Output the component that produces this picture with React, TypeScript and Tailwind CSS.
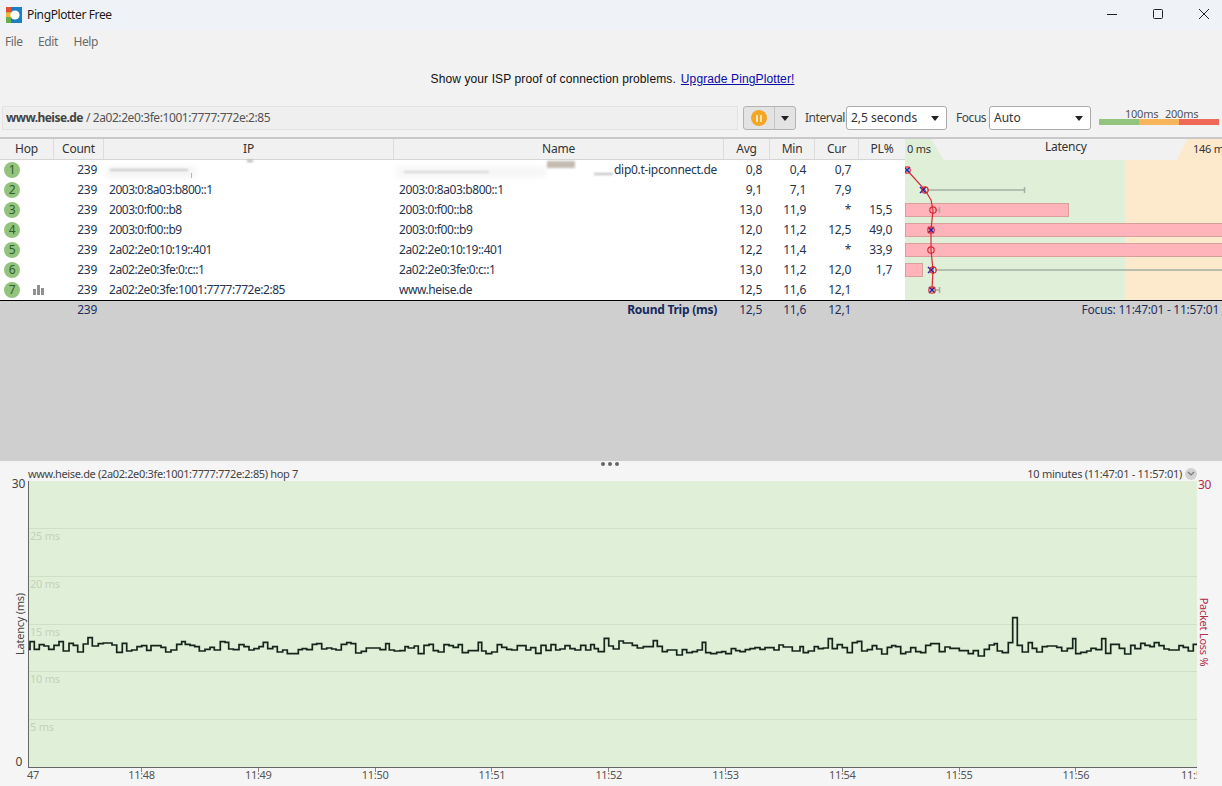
import React from 'react';

// trace readings: [end x, y] in px, 3 runs offset so they line up with the plot
const run1 = [[90,148],[103,125],[118,148],[132,134],[146,138],[162,148],[177,136],[190,125],[207,153],[220,130],[233,136],[250,156],[264,132],[277,113],[295,138],[310,131],[336,129],[350,135],[367,157],[380,130],[395,153],[411,150],[425,140],[440,137],[453,151],[483,137],[497,142],[513,156],[530,150],[545,133],[556,125],[570,133],[584,136],[598,140],[615,153],[630,148],[643,142],[661,150],[675,125],[686,127],[700,147],[717,149],[732,134],[747,140],[762,150],[777,146],[790,140],[803,127],[818,146],[832,140],[848,156],[862,150],[895,161],[907,149],[920,146],[937,149],[950,133],[965,131],[980,147],[995,144],[1008,147],[1024,150],[1040,133],[1053,128],[1067,131],[1084,159],[1099,154],[1140,144],[1157,149],[1168,131],[1183,150],[1200,153]];
const run2 = [[15,152],[25,140],[43,144],[55,138],[72,161],[87,136],[100,133],[115,152],[132,156],[147,134],[160,137],[175,142],[187,134],[205,158],[235,152],[245,127],[258,153],[275,161],[292,156],[305,134],[320,142],[335,148],[352,150],[378,137],[392,150],[407,143],[423,160],[438,136],[453,151],[467,134],[480,150],[495,147],[510,137],[525,146],[542,150],[557,136],[572,150],[583,134],[595,146],[613,155],[626,115],[640,138],[657,147],[670,123],[697,129],[712,136],[730,144],[745,140],[760,140],[772,122],[787,139],[802,155],[830,150],[847,165],[860,149],[877,158],[892,155],[907,150],[917,127],[932,158],[950,161],[965,157],[977,155],[994,161],[1007,146],[1020,152],[1036,155],[1050,149],[1065,146],[1080,143],[1095,148],[1122,143],[1137,150],[1150,135],[1177,141],[1200,153]];
const run3 = [[10,140],[25,158],[43,153],[55,140],[70,146],[85,144],[97,116],[112,146],[127,134],[142,143],[157,158],[172,128],[185,124],[202,153],[217,149],[230,137],[245,147],[262,162],[275,142],[287,137],[302,140],[317,161],[332,156],[347,143],[362,155],[377,158],[392,136],[418,131],[435,155],[450,141],[478,145],[505,152],[520,161],[535,152],[553,168],[568,148],[583,135],[592,131],[607,153],[625,158],[638,128],[652,53],[667,136],[685,156],[697,128],[710,145],[727,156],[742,140],[770,138],[785,142],[802,153],[818,145],[827,116],[842,161],[860,157],[873,153],[888,145],[905,149],[917,116],[932,160],[958,133],[974,145],[992,162],[1005,136],[1022,146],[1035,130],[1050,136],[1063,140],[1077,128],[1092,137],[1107,147],[1137,150],[1150,137],[1165,142],[1180,153],[1192,133]];

function tracePath() {
  const pts = [
    ...run1.map(([x, y]) => [x / 3 - 29, y / 3 + 119]),
    ...run2.map(([x, y]) => [x / 3 + 371, y / 3 + 119]),
    ...run3.map(([x, y]) => [x / 3 + 771, y / 3 + 119]),
  ];
  let d = `M0 ${pts[0][1].toFixed(1)}`;
  for (const [x, y] of pts) {
    d += `V${y.toFixed(1)}H${x.toFixed(1)}`;
  }
  return d;
}

const rows = [
  { hop: 1, ip: '', name: 'dip0.t-ipconnect.de', avg: '0,8', min: '0,4', cur: '0,7', pl: '' },
  { hop: 2, ip: '2003:0:8a03:b800::1', name: '2003:0:8a03:b800::1', avg: '9,1', min: '7,1', cur: '7,9', pl: '' },
  { hop: 3, ip: '2003:0:f00::b8', name: '2003:0:f00::b8', avg: '13,0', min: '11,9', cur: '*', pl: '15,5' },
  { hop: 4, ip: '2003:0:f00::b9', name: '2003:0:f00::b9', avg: '12,0', min: '11,2', cur: '12,5', pl: '49,0' },
  { hop: 5, ip: '2a02:2e0:10:19::401', name: '2a02:2e0:10:19::401', avg: '12,2', min: '11,4', cur: '*', pl: '33,9' },
  { hop: 6, ip: '2a02:2e0:3fe:0:c::1', name: '2a02:2e0:3fe:0:c::1', avg: '13,0', min: '11,2', cur: '12,0', pl: '1,7' },
  { hop: 7, ip: '2a02:2e0:3fe:1001:7777:772e:2:85', name: 'www.heise.de', avg: '12,5', min: '11,6', cur: '12,1', pl: '' },
];

const headers = ['Hop', 'Count', 'IP', 'Name', 'Avg', 'Min', 'Cur', 'PL%'];

const gridLines = [
  { top: 'top-[47px]', label: '25 ms' },
  { top: 'top-[95px]', label: '20 ms' },
  { top: 'top-[143px]', label: '15 ms' },
  { top: 'top-[190px]', label: '10 ms' },
  { top: 'top-[238px]', label: '5 ms' },
];

const ticks = ['11:48', '11:49', '11:50', '11:51', '11:52', '11:53', '11:54', '11:55', '11:56'];

function Logo() {
  return (
    <svg width="16" height="16" viewBox="0 0 16 16">
      <rect width="16" height="16" fill="#1b7fc4" />
      <rect width="5" height="5.3" fill="#e2502f" />
      <rect y="5.3" width="5" height="5.3" fill="#f2b632" />
      <rect y="10.6" width="5" height="5.4" fill="#63b046" />
      <circle cx="9" cy="8" r="4.6" fill="#fff" />
    </svg>
  );
}

function Caret() {
  return <span className="w-0 h-0 border-x-[4px] border-x-transparent border-t-[5px] border-t-[#222]" />;
}

function Select({ value, className }: { value: string; className: string }) {
  return (
    <div className={`h-[24px] shrink-0 bg-white border border-[#ababab] rounded-[3px] flex items-center justify-between pl-[4px] pr-[7px] tracking-normal ${className}`}>
      <span className="text-[#333]">{value}</span>
      <Caret />
    </div>
  );
}

function Point({ x, y, cross, circle }: { x: number; y: number; cross?: number; circle?: boolean }) {
  return (
    <g>
      {cross !== undefined && (
        <path d={`M${cross - 3} ${y - 3}L${cross + 3} ${y + 3}M${cross + 3} ${y - 3}L${cross - 3} ${y + 3}`} stroke="#2222aa" strokeWidth="1.5" />
      )}
      {circle && <circle cx={x} cy={y} r="3.2" fill="none" stroke="#d92b35" strokeWidth="1.2" />}
    </g>
  );
}

function LatencyGraph() {
  return (
    <svg width="317" height="140" className="block">
      <rect width="220" height="140" fill="#e0efd8" />
      <rect x="220" width="97" height="140" fill="#fde9cc" />
      <rect x="0.5" y="43.5" width="163" height="13" fill="#ffb3ba" stroke="#d9a09a" />
      <rect x="0.5" y="63.5" width="330" height="13" fill="#ffb3ba" stroke="#d9a09a" />
      <rect x="0.5" y="83.5" width="330" height="13" fill="#ffb3ba" stroke="#d9a09a" />
      <rect x="0.5" y="103.5" width="17" height="13" fill="#ffb3ba" stroke="#d9a09a" />
      <g stroke="#a3aea0" strokeWidth="1.5">
        <path d="M22 30H119M119.5 27V33" />
        <path d="M30 50H34M34.5 47V53" />
        <path d="M30 110H317" />
        <path d="M30 130H34M34.5 127V133" />
      </g>
      <polyline points="2,10 20,30 26,40 28,50 26,70 26,90 28,110 27,130" fill="none" stroke="#d92b35" strokeWidth="1.2" />
      <Point x={2} y={10} cross={2} circle />
      <Point x={20} y={30} cross={18} circle />
      <Point x={28} y={50} circle />
      <Point x={26} y={70} cross={26} circle />
      <Point x={26} y={90} circle />
      <Point x={28} y={110} cross={26} circle />
      <Point x={27} y={130} cross={27} circle />
    </svg>
  );
}

export default function App() {
  return (
    <div className="w-[1222px] h-[786px] overflow-hidden flex flex-col bg-[#f2f2f2] text-[12px] leading-[16px] font-['Noto_Sans','Open_Sans',sans-serif] tracking-[-0.25px]">
      {/* title bar */}
      <div className="h-[30px] bg-[#eff3f7] flex items-center pl-[6px] shrink-0">
        <Logo />
        <span className="ml-[5px] text-[#1a1a1a] tracking-[-0.38px]">PingPlotter Free</span>
        <div className="ml-auto flex items-center text-[#1a1a1a]">
          <svg width="46" height="30" viewBox="0 0 46 30"><path d="M23 14.5H33" stroke="#222" /></svg>
          <svg width="46" height="30" viewBox="0 0 46 30"><rect x="23.5" y="9.5" width="9" height="9" rx="1" fill="none" stroke="#222" /></svg>
          <svg width="46" height="30" viewBox="0 0 46 30"><path d="M23 9L33 19M33 9L23 19" stroke="#222" /></svg>
        </div>
      </div>

      {/* menu */}
      <div className="h-[23px] flex items-center gap-[15.5px] pl-[5px] text-[#6a6a6a] shrink-0 tracking-[-0.4px]">
        <span>File</span>
        <span>Edit</span>
        <span>Help</span>
      </div>

      {/* upgrade strip */}
      <div className="h-[52px] flex items-center justify-center pl-[3px] font-['Liberation_Sans',sans-serif] tracking-[0.11px] text-[#111] shrink-0">
        <span className="mr-[5px]">Show your ISP proof of connection problems.</span>
        <span className="text-[#0a0aa8] underline">Upgrade PingPlotter!</span>
      </div>

      {/* target bar */}
      <div className="h-[32px] flex items-start pl-[2px] shrink-0 pt-[1px]">
        <div className="w-[736px] h-[24px] shrink-0 bg-[#efefef] border border-[#e2e2e2] flex items-center pl-[3px] text-[#555]">
          <span className="font-bold text-[#444] tracking-[-0.55px]">www.heise.de</span>
          <span className="ml-[3px] tracking-[-0.42px]">/ 2a02:2e0:3fe:1001:7777:772e:2:85</span>
        </div>
        <div className="ml-[5px] w-[53px] h-[24px] shrink-0 border border-[#b3b3b3] rounded-[3px] bg-[#e3e3e3] flex items-center">
          <div className="w-[31px] h-full flex items-center justify-center border-r border-[#c4c4c4]">
            <div className="w-[16px] h-[16px] rounded-full bg-[#f5a623] flex items-center justify-center gap-[2px]">
              <span className="w-[2px] h-[7px] bg-[#fbe3b5]" />
              <span className="w-[2px] h-[7px] bg-[#fbe3b5]" />
            </div>
          </div>
          <div className="flex-1 flex items-center justify-center"><Caret /></div>
        </div>
        <span className="ml-[9px] w-[41px] shrink-0 text-[#444] h-[24px] flex items-center tracking-[-0.45px]">Interval</span>
        <Select value="2,5 seconds" className="w-[101px]" />
        <span className="ml-[9px] w-[33px] shrink-0 text-[#444] h-[24px] flex items-center tracking-[-0.45px]">Focus</span>
        <Select value="Auto" className="w-[102px]" />
        <div className="ml-[8px] w-[120px] shrink-0 h-[24px] flex flex-col">
          <div className="h-[13px] relative text-[11px] leading-[13px] text-[#555]">
            <span className="absolute left-[26px] top-[1px]">100ms</span>
            <span className="absolute left-[66px] top-[1px]">200ms</span>
          </div>
          <div className="flex h-[6px]">
            <div className="w-[40px] bg-[#93c47d]" />
            <div className="w-[40px] bg-[#f6b55b]" />
            <div className="w-[40px] bg-[#ee6a57]" />
          </div>
        </div>
      </div>

      {/* hop table */}
      <div className="border-t-2 border-[#c9c9c9] flex shrink-0 bg-white">
        <div className="w-[905px]">
          <div className="grid grid-cols-[54px_50px_290px_330px_46px_45px_44px_46px] h-[21px] bg-[#f1f1f1] border-b border-[#d5d5d5] text-[#333]">
            {headers.map((h) => (
              <div key={h} className="flex items-center justify-center border-r border-[#dcdcdc] last:border-r-0">{h}</div>
            ))}
          </div>
          {rows.map((r) => (
            <div key={r.hop} className="grid grid-cols-[54px_50px_290px_330px_46px_45px_44px_46px] h-[20px] items-center text-[#25344f] whitespace-nowrap">
              <div className="pl-[4px] flex items-center">
                <span className="w-[16px] h-[16px] rounded-full bg-[#93c47d] text-[#2e5e2e] flex items-center justify-center">{r.hop}</span>
                {r.hop === 7 && (
                  <svg width="12" height="10" viewBox="0 0 12 10" className="ml-[13px]">
                    <rect x="0" y="4" width="3" height="6" fill="#909090" />
                    <rect x="4" y="0" width="3" height="10" fill="#909090" />
                    <rect x="8" y="3" width="3" height="7" fill="#909090" />
                  </svg>
                )}
              </div>
              <div className="text-right pr-[7px]">239</div>
              <div className="pl-[5px] relative h-full flex items-center tracking-[-0.47px]">
                {r.ip}
                {r.hop === 1 && (
                  <>
                    <span className="absolute left-[2px] top-[6px] w-[90px] h-[12px] bg-[#f6f6f6] blur-[2px]" />
                    <span className="absolute left-[6px] top-[9px] w-[78px] h-[2px] bg-[#c8c8c8] blur-[1px]" />
                    <span className="absolute left-[87px] top-[13px] w-[1px] h-[5px] bg-[#b5b5b5] blur-[0.5px]" />
                    <span className="absolute left-[143px] top-[0px] w-[6px] h-[2px] bg-[#a8a8a8] blur-[1px]" />
                  </>
                )}
              </div>
              <div className={`relative h-full flex items-center ${r.hop === 1 ? 'pl-[220px] tracking-[-0.3px]' : 'pl-[5px] tracking-[-0.42px]'}`}>
                {r.name}
                {r.hop === 1 && (
                  <>
                    <span className="absolute left-[2px] top-[6px] w-[150px] h-[12px] bg-[#f7f7f7] blur-[2px]" />
                    <span className="absolute left-[10px] top-[11px] w-[85px] h-[2px] bg-[#d6d6d6] blur-[1px]" />
                    <span className="absolute left-[153px] top-[1px] w-[28px] h-[7px] bg-[#c4bcb2] blur-[1px]" />
                    <span className="absolute left-[200px] top-[13px] w-[19px] h-[2px] bg-[#bdbdbd] blur-[1px]" />
                  </>
                )}
              </div>
              <div className="text-right pr-[8px]">{r.avg}</div>
              <div className="text-right pr-[9px]">{r.min}</div>
              <div className="text-right pr-[8px]">{r.cur}</div>
              <div className="text-right pr-[13px]">{r.pl}</div>
            </div>
          ))}
        </div>
        <div className="w-[317px]">
          <div className="h-[21px] bg-[#f1f1f1] relative text-[#333]">
            <svg width="317" height="21" className="absolute inset-0">
              <path d="M0 0H26L39 21H0Z" fill="#e0efd8" />
              <path d="M317 0H282L272 21H317Z" fill="#fde9cc" />
            </svg>
            <span className="absolute left-[2px] top-[2px] text-[11px]">0 ms</span>
            <span className="absolute left-[140px] top-[0px]">Latency</span>
            <span className="absolute left-[288px] top-[2px] text-[11px] whitespace-nowrap">146 ms</span>
          </div>
          <LatencyGraph />
        </div>
      </div>

      {/* summary + empty grey area */}
      <div className="h-[161px] bg-[#cfcfcf] border-t border-black shrink-0 text-[#1f3060]">
        <div className="grid grid-cols-[54px_50px_290px_330px_46px_45px_44px_46px_1fr] h-[17px] items-center">
          <div />
          <div className="text-right pr-[7px]">239</div>
          <div />
          <div className="text-right pr-[7px] font-bold text-[#16295c]">Round Trip (ms)</div>
          <div className="text-right pr-[8px]">12,5</div>
          <div className="text-right pr-[9px]">11,6</div>
          <div className="text-right pr-[8px]">12,1</div>
          <div />
          <div className="text-right pr-[3px]">Focus: 11:47:01 - 11:57:01</div>
        </div>
      </div>

      {/* timeline */}
      <div className="flex-1 bg-[#f5f5f5] flex flex-col relative text-[#444]">
        <div className="absolute left-[601px] top-[1px] flex gap-[3px]">
          <span className="w-[4px] h-[4px] rounded-full bg-[#666]" />
          <span className="w-[4px] h-[4px] rounded-full bg-[#666]" />
          <span className="w-[4px] h-[4px] rounded-full bg-[#666]" />
        </div>
        <div className="h-[20px] flex items-center pt-[5px] pl-[28px] pr-[25px] text-[11px] tracking-[-0.35px] text-[#444] shrink-0">
          <span>www.heise.de (2a02:2e0:3fe:1001:7777:772e:2:85) hop 7</span>
          <span className="ml-auto tracking-[-0.28px]">10 minutes (11:47:01 - 11:57:01)</span>
          <span className="ml-[3px] w-[12px] h-[12px] rounded-full bg-[#d2d2d2] flex items-center justify-center">
            <svg width="8" height="5" viewBox="0 0 8 5"><path d="M1 1L4 4L7 1" fill="none" stroke="#777" strokeWidth="1.2" /></svg>
          </span>
        </div>
        <div className="flex h-[287px] shrink-0">
          <div className="w-[28px] relative">
            <span className="absolute right-[3px] -top-[5px] text-[#444]">30</span>
            <span className="absolute left-[20px] top-[143px] -translate-x-1/2 -translate-y-1/2 -rotate-90 whitespace-nowrap text-[11px]">Latency (ms)</span>
            <span className="absolute right-[6px] top-[273px]">0</span>
          </div>
          <div className="w-[1169px] bg-[#e0efd8] border-l border-b border-[#666] relative">
            {gridLines.map((g) => (
              <div key={g.label} className={`absolute left-0 right-0 h-px bg-[#cfe0c6] ${g.top}`}>
                <span className="absolute left-[1px] top-[0px] text-[11px] text-[#c3d2bb] whitespace-nowrap">{g.label}</span>
              </div>
            ))}
            <svg width="1168" height="287" className="absolute left-0 top-0">
              <path d={tracePath()} fill="none" stroke="#14261a" strokeWidth="1.7" />
            </svg>
          </div>
          <div className="w-[25px] relative text-[#b22b4a]">
            <span className="absolute left-[1px] -top-[4px]">30</span>
            <span className="absolute left-[7px] top-[151px] -translate-x-1/2 -translate-y-1/2 rotate-90 whitespace-nowrap text-[11px]">Packet Loss %</span>
          </div>
        </div>
        <div className="relative w-[1197px] flex-1 overflow-hidden text-[#555] text-[11px] tracking-[-0.3px]">
          <span className="absolute left-[27px] -top-[1px]">47</span>
          {ticks.map((t, i) => (
            <span key={t} className="absolute -top-[1px] -translate-x-1/2" style={{ left: 141.5 + i * 116.8 }}>{t}</span>
          ))}
          {ticks.map((t, i) => (
            <span key={t} className="absolute top-0 w-px h-[4px] bg-[#888]" style={{ left: 141 + i * 116.8 }} />
          ))}
          <span className="absolute left-[1181px] -top-[1px]">11:57</span>
        </div>
      </div>
    </div>
  );
}
